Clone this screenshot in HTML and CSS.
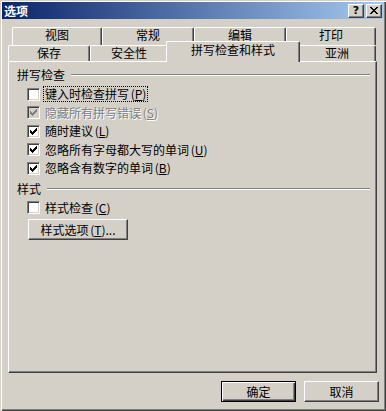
FILE: index.html
```html
<!DOCTYPE html>
<html lang="zh-CN">
<head>
    <meta charset="UTF-8">
    <meta name="viewport" content="width=device-width, initial-scale=1.0">
    <title>选项</title>
    <link rel="stylesheet" href="styles.css">
</head>
<body>

<div class="window">
    <div class="titlebar">
        <span class="title">选项</span>
        <div class="cap-btns">
            <span class="cap-btn">?</span>
            <span class="cap-btn">
                <svg width="8" height="7" viewBox="0 0 8 7" shape-rendering="crispEdges">
                    <path d="M0 0h2v1H0zM6 0h2v1H6zM1 1h2v1H1zM5 1h2v1H5zM2 2h4v1H2zM3 3h2v1H3zM2 4h4v1H2zM1 5h2v1H1zM5 5h2v1H5zM0 6h2v1H0zM6 6h2v1H6z" fill="#000"/>
                </svg>
            </span>
        </div>
    </div>

    <div class="tabs">
        <div class="tab-row back">
            <div class="tab" style="width: 90px">视图</div>
            <div class="tab" style="width: 92px">常规</div>
            <div class="tab" style="width: 92px">编辑</div>
            <div class="tab" style="width: 90px">打印</div>
        </div>
        <div class="tab-row front">
            <div class="tab" style="width: 82px">保存</div>
            <div class="tab" style="width: 78px">安全性</div>
            <div class="tab selected" style="width: 134px">拼写检查和样式</div>
            <div class="tab" style="width: 78px">亚洲</div>
        </div>
    </div>

    <div class="panel">
        <div class="group-title">拼写检查</div>
        <ul class="opts">
            <li class="opt">
                <span class="box"></span>
                <span class="label focus">键入时检查拼写 (<u>P</u>)</span>
            </li>
            <li class="opt disabled">
                <span class="box"><svg class="check" width="7" height="7" viewBox="0 0 7 7" shape-rendering="crispEdges"><path d="M0 2h1v3H0zM1 3h1v3H1zM2 4h1v3H2zM3 3h1v3H3zM4 2h1v3H4zM5 1h1v3H5zM6 0h1v3H6z"/></svg></span>
                <span class="label">隐藏所有拼写错误 (<u>S</u>)</span>
            </li>
            <li class="opt">
                <span class="box"><svg class="check" width="7" height="7" viewBox="0 0 7 7" shape-rendering="crispEdges"><path d="M0 2h1v3H0zM1 3h1v3H1zM2 4h1v3H2zM3 3h1v3H3zM4 2h1v3H4zM5 1h1v3H5zM6 0h1v3H6z"/></svg></span>
                <span class="label">随时建议 (<u>L</u>)</span>
            </li>
            <li class="opt">
                <span class="box"><svg class="check" width="7" height="7" viewBox="0 0 7 7" shape-rendering="crispEdges"><path d="M0 2h1v3H0zM1 3h1v3H1zM2 4h1v3H2zM3 3h1v3H3zM4 2h1v3H4zM5 1h1v3H5zM6 0h1v3H6z"/></svg></span>
                <span class="label">忽略所有字母都大写的单词 (<u>U</u>)</span>
            </li>
            <li class="opt">
                <span class="box"><svg class="check" width="7" height="7" viewBox="0 0 7 7" shape-rendering="crispEdges"><path d="M0 2h1v3H0zM1 3h1v3H1zM2 4h1v3H2zM3 3h1v3H3zM4 2h1v3H4zM5 1h1v3H5zM6 0h1v3H6z"/></svg></span>
                <span class="label">忽略含有数字的单词 (<u>B</u>)</span>
            </li>
        </ul>

        <div class="group-title second">样式</div>
        <ul class="opts">
            <li class="opt">
                <span class="box"></span>
                <span class="label">样式检查 (<u>C</u>)</span>
            </li>
        </ul>
        <button class="btn style-btn">样式选项 (<u>T</u>)...</button>
    </div>

    <div class="actions">
        <button class="btn default">确定</button>
        <button class="btn">取消</button>
    </div>
</div>

</body>
</html>
```

FILE: styles.css
```css
body {
    margin: 0;
    padding: 0;
    background-color: #d4d0c8;
    font-family: "Noto Sans CJK SC", sans-serif;
    font-size: 12px;
    color: #000;
}

.window {
    width: 386px;
    height: 411px;
    box-sizing: border-box;
    padding: 2px;
    background-color: #d4d0c8;
    box-shadow: inset 1px 1px #d4d0c8, inset 2px 2px #fff, inset -1px -1px #404040, inset -2px -2px #808080;
}

.titlebar {
    height: 17px;
    display: flex;
    align-items: center;
    justify-content: space-between;
    padding: 0 2px;
    background: linear-gradient(to right, #0a246a, #a6caf0);
    color: #fff;
    font-weight: bold;
    line-height: 17px;
}

.cap-btns {
    display: flex;
    gap: 2px;
}

.cap-btn {
    width: 16px;
    height: 14px;
    box-sizing: border-box;
    display: flex;
    align-items: center;
    justify-content: center;
    background-color: #d4d0c8;
    border: 1px solid;
    border-color: #fff #404040 #404040 #fff;
    box-shadow: inset -1px -1px #808080;
    color: #000;
    font-family: "DejaVu Sans", sans-serif;
    font-size: 11px;
    font-weight: bold;
    line-height: 12px;
}

/* tabs */
.tabs {
    margin-top: 8px;
}

.tab-row {
    display: flex;
}

.tab-row.back {
    height: 18px;
    padding-left: 10px;
}

.tab-row.front {
    height: 16px;
    padding-left: 6px;
}

.tab {
    box-sizing: border-box;
    text-align: center;
    background-color: #d4d0c8;
    border-top: 1px solid #fff;
    border-left: 1px solid #fff;
    border-right: 1px solid #404040;
    border-radius: 2px 2px 0 0;
    box-shadow: inset -1px 0 #808080;
    line-height: 14px;
}

.front .tab {
    line-height: 14px;
}

.front .tab.selected {
    position: relative;
    z-index: 1;
    height: 21px;
    margin: -4px -2px -1px;
    padding-top: 1px;
    line-height: 13px;
}

/* panel */
.panel {
    width: 369px;
    height: 312px;
    margin-left: 6px;
    box-sizing: border-box;
    padding: 6px 6px 0 8px;
    border: 1px solid;
    border-color: #fff #404040 #404040 #fff;
    box-shadow: inset -1px -1px #808080;
}

.group-title {
    display: flex;
    align-items: center;
    height: 14px;
    line-height: 14px;
}

.group-title::after {
    content: "";
    flex: 1;
    margin-left: 6px;
    border-top: 1px solid #808080;
    border-bottom: 1px solid #fff;
}

.group-title.second {
    margin-top: 4px;
}

.opts {
    list-style: none;
    margin: 3px 0 0;
    padding: 0 0 0 10px;
}

.opt {
    display: flex;
    align-items: center;
    gap: 3px;
    height: 18.5px;
}

.box {
    width: 13px;
    height: 13px;
    box-sizing: border-box;
    display: flex;
    align-items: center;
    justify-content: center;
    background-color: #fff;
    border: 1px solid;
    border-color: #808080 #fff #fff #808080;
    box-shadow: inset 1px 1px #404040, inset -1px -1px #d4d0c8;
}

.check {
    fill: #000;
}

.label {
    border: 1px solid transparent;
    padding: 0 1px;
    line-height: 14px;
    white-space: nowrap;
    word-spacing: -1px;
}

.label.focus {
    border: 1px dotted #000;
}

.disabled .box {
    background-color: #d4d0c8;
}

.disabled .check {
    fill: #808080;
}

.disabled .label {
    color: #808080;
    text-shadow: 1px 1px #fff;
}

/* buttons */
.btn {
    box-sizing: border-box;
    height: 21px;
    padding: 0;
    background-color: #d4d0c8;
    border: 1px solid;
    border-color: #fff #404040 #404040 #fff;
    box-shadow: inset -1px -1px #808080;
    font-family: "Noto Sans CJK SC", sans-serif;
    font-size: 12px;
    line-height: 17px;
    color: #000;
}

.style-btn {
    display: block;
    width: 100px;
    margin: 2px 0 0 11px;
    word-spacing: -1px;
}

.actions {
    display: flex;
    justify-content: flex-end;
    gap: 8px;
    margin-top: 8px;
    padding-right: 5px;
}

.actions .btn {
    width: 75px;
}

.btn.default {
    border-color: #000;
    box-shadow: inset 1px 1px #fff, inset -1px -1px #404040, inset -2px -2px #808080;
}
```
